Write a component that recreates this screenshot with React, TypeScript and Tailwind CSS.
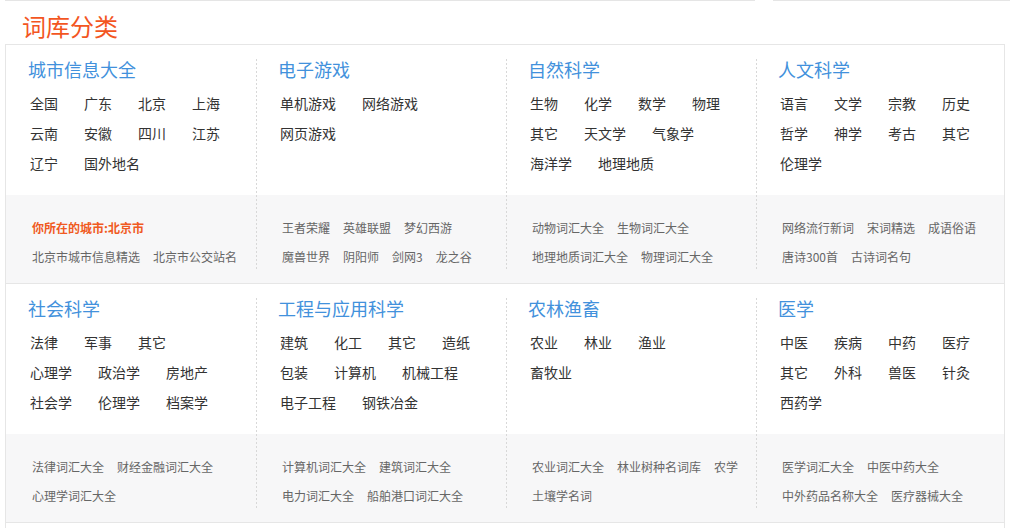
import React from 'react';

type Category = {
  title: string;
  links: string[][];
  extra: { text: string; hot?: boolean }[][];
};

const ROW_ONE: Category[] = [
  {
    title: '城市信息大全',
    links: [
      ['全国', '广东', '北京', '上海'],
      ['云南', '安徽', '四川', '江苏'],
      ['辽宁', '国外地名'],
    ],
    extra: [
      [{ text: '你所在的城市:北京市', hot: true }],
      [{ text: '北京市城市信息精选' }, { text: '北京市公交站名' }],
    ],
  },
  {
    title: '电子游戏',
    links: [['单机游戏', '网络游戏'], ['网页游戏']],
    extra: [
      [{ text: '王者荣耀' }, { text: '英雄联盟' }, { text: '梦幻西游' }],
      [{ text: '魔兽世界' }, { text: '阴阳师' }, { text: '剑网3' }, { text: '龙之谷' }],
    ],
  },
  {
    title: '自然科学',
    links: [
      ['生物', '化学', '数学', '物理'],
      ['其它', '天文学', '气象学'],
      ['海洋学', '地理地质'],
    ],
    extra: [
      [{ text: '动物词汇大全' }, { text: '生物词汇大全' }],
      [{ text: '地理地质词汇大全' }, { text: '物理词汇大全' }],
    ],
  },
  {
    title: '人文科学',
    links: [
      ['语言', '文学', '宗教', '历史'],
      ['哲学', '神学', '考古', '其它'],
      ['伦理学'],
    ],
    extra: [
      [{ text: '网络流行新词' }, { text: '宋词精选' }, { text: '成语俗语' }],
      [{ text: '唐诗300首' }, { text: '古诗词名句' }],
    ],
  },
];

const ROW_TWO: Category[] = [
  {
    title: '社会科学',
    links: [
      ['法律', '军事', '其它'],
      ['心理学', '政治学', '房地产'],
      ['社会学', '伦理学', '档案学'],
    ],
    extra: [
      [{ text: '法律词汇大全' }, { text: '财经金融词汇大全' }],
      [{ text: '心理学词汇大全' }],
    ],
  },
  {
    title: '工程与应用科学',
    links: [
      ['建筑', '化工', '其它', '造纸'],
      ['包装', '计算机', '机械工程'],
      ['电子工程', '钢铁冶金'],
    ],
    extra: [
      [{ text: '计算机词汇大全' }, { text: '建筑词汇大全' }],
      [{ text: '电力词汇大全' }, { text: '船舶港口词汇大全' }],
    ],
  },
  {
    title: '农林渔畜',
    links: [['农业', '林业', '渔业'], ['畜牧业']],
    extra: [
      [{ text: '农业词汇大全' }, { text: '林业树种名词库' }, { text: '农学' }],
      [{ text: '土壤学名词' }],
    ],
  },
  {
    title: '医学',
    links: [
      ['中医', '疾病', '中药', '医疗'],
      ['其它', '外科', '兽医', '针灸'],
      ['西药学'],
    ],
    extra: [
      [{ text: '医学词汇大全' }, { text: '中医中药大全' }],
      [{ text: '中外药品名称大全' }, { text: '医疗器械大全' }],
    ],
  },
];

function Column({ cat, first }: { cat: Category; first: boolean }) {
  return (
    <div className="relative flex flex-col">
      {!first && (
        <span className="absolute left-0 top-[14px] bottom-[13px] w-px bg-[repeating-linear-gradient(to_bottom,#d8d8d8_0,#d8d8d8_2px,transparent_2px,transparent_4px)]" />
      )}
      <div className="h-[150px] pl-[22px] pt-[12px]">
        <h3 className="text-[18px] leading-[24px] text-[#4291dc] font-normal">{cat.title}</h3>
        <div className="mt-[7px] pl-[2px]">
          {cat.links.map((row, i) => (
            <div key={i} className="flex h-[30px] items-center">
              {row.map((t) => (
                <a key={t} className="mr-[26px] whitespace-nowrap text-[14px] text-[#333]">
                  {t}
                </a>
              ))}
            </div>
          ))}
        </div>
      </div>
      <div className="h-[88px] bg-[#f7f7f8] pl-[26px] pt-[18px]">
        {cat.extra.map((row, i) => (
          <div key={i} className="flex h-[29px] items-center">
            {row.map((l) => (
              <a
                key={l.text}
                className={
                  l.hot
                    ? 'mr-[13px] whitespace-nowrap text-[12px] font-bold text-[#f05a22]'
                    : 'mr-[13px] whitespace-nowrap text-[12px] text-[#666]'
                }
              >
                {l.text}
              </a>
            ))}
          </div>
        ))}
      </div>
    </div>
  );
}

function Section({ cats }: { cats: Category[] }) {
  return (
    <div className="grid grid-cols-[250px_250px_250px_1fr] border-b border-[#e6e6e6]">
      {cats.map((c, i) => (
        <Column key={c.title} cat={c} first={i === 0} />
      ))}
    </div>
  );
}

export default function App() {
  return (
    <div
      className="h-[528px] w-[1014px] overflow-hidden bg-white"
      style={{ fontFamily: '"Noto Sans CJK SC", "Noto Sans", sans-serif' }}
    >
      {/* rules left over from the block above */}
      <div className="flex h-px">
        <div className="ml-[5px] w-[750px] bg-[#e5e5e5]" />
        <div className="ml-[18px] w-[237px] bg-[#e5e5e5]" />
      </div>

      <div className="h-[43px] pl-[22px] pt-[9px]">
        <h2 className="text-[24px] leading-[32px] font-normal text-[#f3561f]">词库分类</h2>
      </div>

      <div className="ml-[5px] w-[1000px] border-x border-t border-[#e6e6e6]">
        <Section cats={ROW_ONE} />
        <Section cats={ROW_TWO} />
        <div className="h-[20px]" />
      </div>
    </div>
  );
}
